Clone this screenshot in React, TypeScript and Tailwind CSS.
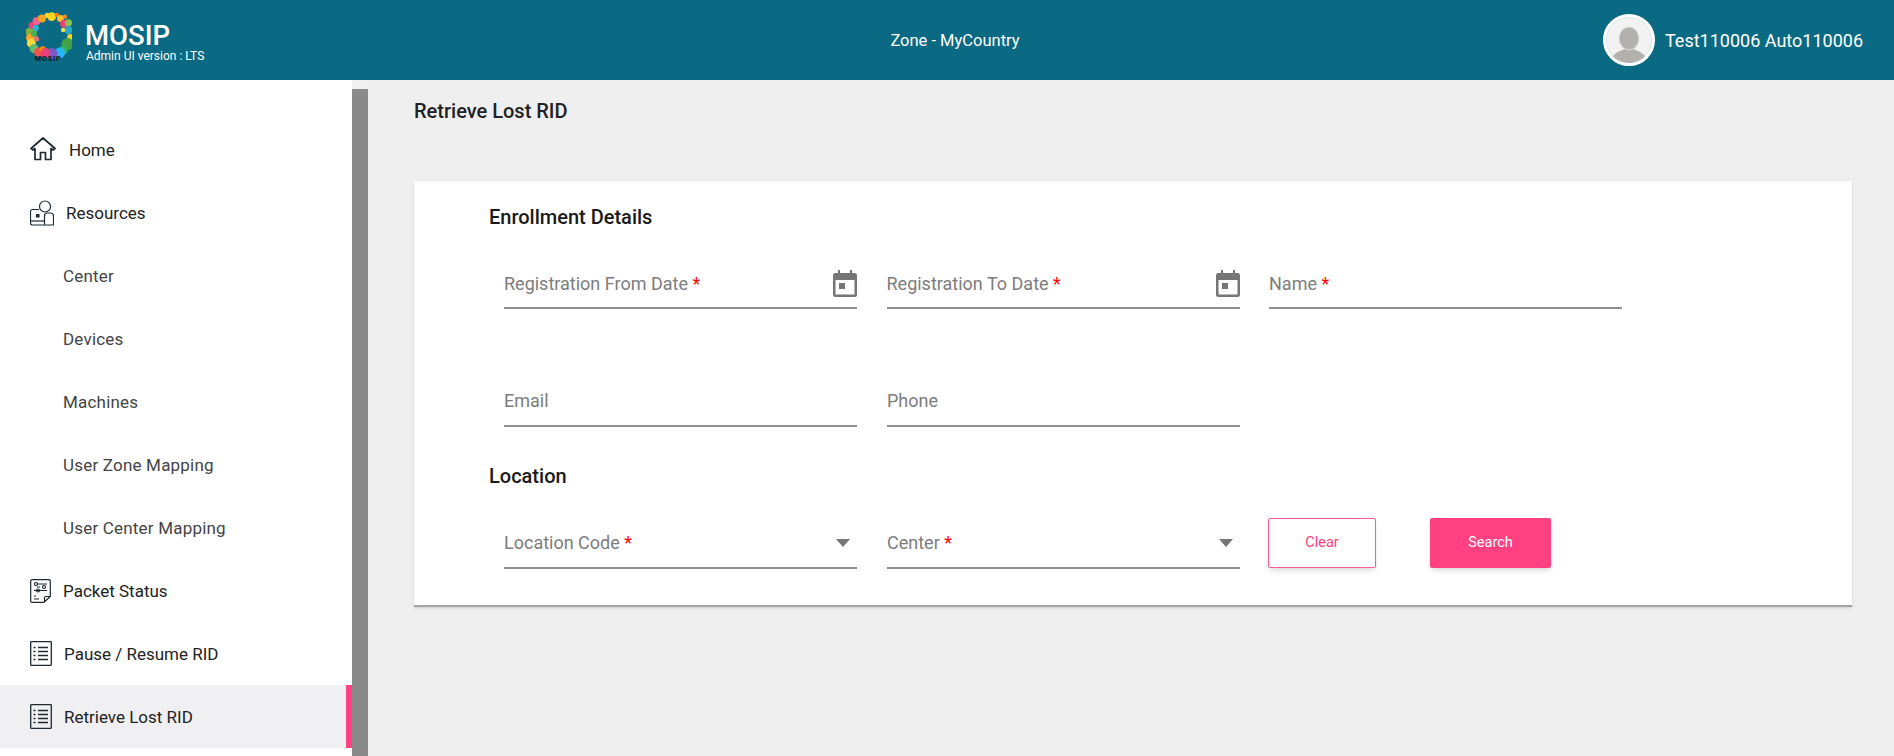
import React from "react";

const Logo = () => {
  const dots: [number, number, number, string][] = [
    [4, 22, 4.5, "#7cb342"], [5, 29, 5, "#f9a825"], [7, 15, 4, "#ec407a"], [12, 10, 4.5, "#f06292"], [11, 18, 3.5, "#29b6d8"],
    [6, 35, 5, "#fdd835"], [9, 41, 5, "#66bb6a"], [14, 45, 5, "#ef5350"], [19, 42, 3.5, "#fb8c00"],
    [18, 7, 4.5, "#f5a623"], [24, 3.5, 3, "#fdd835"], [29, 5, 5, "#f9d423"], [35, 3, 2.5, "#f57c20"], [39, 7, 4, "#fbc02d"],
    [44, 5, 2.5, "#f0892c"], [43, 13, 4.5, "#ec407a"], [48, 12, 4, "#8bc34a"], [48, 20, 4.5, "#26a9c9"], [42, 20, 2.5, "#f5e050"],
    [50, 28, 3.5, "#f9d423"], [47, 36, 7, "#43a047"], [42, 43, 5, "#2fb56a"], [38, 46, 6, "#29b6f6"], [29, 47, 6.5, "#7e57c2"],
    [22, 46, 5.5, "#ec407a"], [12, 30, 3, "#e57373"], [9, 24, 3.5, "#4caf50"],
  ];
  return (
    <svg width="46" height="50" viewBox="0 0 52 56" className="shrink-0 -mt-[6px]">
      {dots.map(([x, y, r, c], i) => (
        <circle key={i} cx={x} cy={y} r={r} fill={c} />
      ))}
      <ellipse cx="26" cy="24" rx="13" ry="11.500" fill="#0b6a83" />
      <text x="25" y="55" textAnchor="middle" fontSize="8.500" fontWeight="900" fill="#10222b" fontFamily="Roboto, sans-serif" letterSpacing="0.8">MOSIP</text>
    </svg>
  );
};

const HomeIcon = () => (
  <svg width="26" height="24" viewBox="0 0 26 24" fill="none" stroke="#1d2a30" strokeWidth="1.700" strokeLinejoin="round" strokeLinecap="round" className="-mt-[4px]">
    <path d="M1 11.500 13 1l12 10.500-2 1.500-2-1.500v11h-5.500v-7h-5v7H5v-11l-2 1.500z" />
  </svg>
);

const ResourcesIcon = () => (
  <svg width="24" height="26" viewBox="0 0 24 26" fill="none" stroke="#1d2a30" strokeWidth="1.200" strokeLinejoin="round" className="-mt-[2px]">
    <circle cx="15" cy="6.500" r="5.500" />
    <path d="M9 9.500H2.500a2 2 0 0 0-2 2V23a2 2 0 0 0 2 2h21V16a3 3 0 0 0-3-3h-3a3 3 0 0 0-3 3v9" />
    <path d="M.5 21h14" />
    <rect x="6.500" y="14.500" width="2.500" height="2.500" fill="#1d2a30" />
  </svg>
);

const PacketIcon = () => (
  <svg width="21" height="24" viewBox="0 0 21 24" fill="none" stroke="#1d2a30" strokeWidth="1.200" strokeLinejoin="round" className="-mt-[2px]">
    <path d="M2 .7h17a1.300 1.300 0 0 1 1.300 1.300v15.500L14 23.300H2A1.300 1.300 0 0 1 .7 22V2A1.300 1.300 0 0 1 2 .7z" />
    <path d="M14.500 23v-4a1.500 1.500 0 0 1 1.500-1.500h4" />
    <path d="M8 5h9M4 11.500h13M10 8h-3M4 20h5M4 17h2" />
    <circle cx="6" cy="5" r="1.500" />
    <circle cx="14" cy="8" r="1.500" />
    <circle cx="8" cy="11.500" r="1.500" />
  </svg>
);

const ListIcon = () => (
  <svg width="22" height="25" viewBox="0 0 22 25" fill="none" stroke="#1d2a30" strokeWidth="1.300" className="-mt-[2px]">
    <rect x="0.700" y="0.700" width="20.600" height="23.600" rx="0.500" />
    <path d="M8 6.500h10M8 10.500h10M8 14.500h10M8 18.500h10" />
    <path d="M3.500 6.500h2M3.500 10.500h2M3.500 14.500h2M3.500 18.500h2" />
  </svg>
);

const Calendar = () => (
  <svg width="24" height="27" viewBox="0 0 24 27" fill="#757575" className="shrink-0">
    <path d="M5 0h2v3h10V0h2v3h2.500A2.500 2.500 0 0 1 24 5.500v19a2.500 2.500 0 0 1-2.500 2.500h-19A2.500 2.500 0 0 1 0 24.500v-19A2.500 2.500 0 0 1 2.500 3H5zM2.500 10v14.500h19V10z" />
    <rect x="6" y="13" width="6" height="6" />
  </svg>
);

const Caret = () => <div className="w-0 h-0 shrink-0 mr-[7px] border-x-[7px] border-x-transparent border-t-[8px] border-t-[#757575]" />;

const Field = ({ label, req, right, tight }: { label: string; req?: boolean; right?: React.ReactNode; tight?: boolean }) => (
  <div className={`w-[353px] h-[52px] shrink-0 border-b-2 border-[#8f8f8f] flex items-center justify-between ${tight ? "pt-[1px]" : "pt-[3px]"}`}>
    <span className="text-[18px] text-[#7d7d7d] leading-none">
      {label}
      {req && <span className="text-[#ff0000]"> *</span>}
    </span>
    {right}
  </div>
);

const NavItem = ({ icon, label, active, gap }: { icon?: React.ReactNode; label: string; active?: boolean; gap?: string }) => (
  <div className={`relative h-[63px] flex items-center pt-[2px] pl-[30px] text-[17px] text-[#222] ${active ? "bg-[#f0f0f2]" : ""}`}>
    <div className={`flex items-center ${gap ?? ""}`}>
      {icon}
      <span className={icon ? "" : "ml-[33px] tracking-[0.2px] text-[#444]"}>{label}</span>
    </div>
    {active && <div className="absolute right-0 top-0 bottom-0 w-[6px] bg-[#ff4081]" />}
  </div>
);

export default function App() {
  return (
    <div className="w-[1894px] h-[756px] overflow-hidden flex flex-col bg-[#efefef] font-['Roboto',sans-serif]">
      <header className="h-[80px] shrink-0 bg-[#0b6a83] text-white flex items-center justify-between pl-[26px] pr-[31px]">
        <div className="w-[400px] flex items-center gap-[14px]">
          <Logo />
          <div className="flex flex-col pt-[4px]">
            <span className="text-[27.500px] font-medium leading-[28px] -ml-[1px]">MOSIP</span>
            <span className="text-[12px] leading-[12px]">Admin UI version : LTS</span>
          </div>
        </div>
        <div className="text-[16.500px] pt-[3px] ml-[21px]">Zone - MyCountry</div>
        <div className="w-[400px] flex items-center justify-end gap-[10px]">
          <div className="w-[52px] h-[52px] rounded-full border-[3px] border-white bg-[#f2f2f2] overflow-hidden">
            <svg viewBox="0 0 46 46" width="46" height="46">
              <circle cx="23" cy="23" r="22.500" fill="none" stroke="#cfe3e8" strokeWidth="0.800" />
              <path d="M6 42c1-6 8-8 13-10h8c5 2 12 4 13 10a23 23 0 0 1-34 0z" fill="#b3b1ae" />
              <ellipse cx="23" cy="21.500" rx="10" ry="11.500" fill="#b3b1ae" stroke="#e4e4e4" strokeWidth="0.800" />
            </svg>
          </div>
          <span className="text-[18px]">Test110006 Auto110006</span>
        </div>
      </header>
      <div className="flex-1 flex min-h-0">
        <aside className="w-[352px] shrink-0 bg-white pt-[38px]">
          <NavItem icon={<HomeIcon />} label="Home" gap="gap-[13px]" />
          <NavItem icon={<ResourcesIcon />} label="Resources" gap="gap-[12px]" />
          <NavItem label="Center" />
          <NavItem label="Devices" />
          <NavItem label="Machines" />
          <NavItem label="User Zone Mapping" />
          <NavItem label="User Center Mapping" />
          <NavItem icon={<PacketIcon />} label="Packet Status" gap="gap-[12px]" />
          <NavItem icon={<ListIcon />} label="Pause / Resume RID" gap="gap-[12px]" />
          <NavItem icon={<ListIcon />} label="Retrieve Lost RID" active gap="gap-[12px]" />
        </aside>
        <div className="w-[16px] shrink-0 bg-[#f1f1f1] pt-[9px]">
          <div className="h-full bg-[#8a8a8a]" />
        </div>
        <main className="flex-1 min-w-0 pl-[46px] pr-[42px]">
          <h1 className="text-[20px] font-medium text-[#222] leading-[22px] pt-[20px]">Retrieve Lost RID</h1>
          <section className="mt-[59px] h-[426px] bg-white border-b-2 border-[#a3a3a3] shadow-sm pl-[75px] pt-[22px]">
            <h2 className="text-[20px] font-medium text-[#1a1a1a] leading-[28px]">Enrollment Details</h2>
            <div className="ml-[15px] mt-[26px] flex gap-[29.500px]">
              <Field label="Registration From Date" req right={<Calendar />} />
              <Field label="Registration To Date" req right={<Calendar />} />
              <Field label="Name" req />
            </div>
            <div className="ml-[15px] mt-[66px] flex gap-[30px]">
              <Field label="Email" tight />
              <Field label="Phone" tight />
            </div>
            <h2 className="mt-[35px] text-[20px] font-medium text-[#1a1a1a] leading-[28px]">Location</h2>
            <div className="ml-[15px] mt-[27px] flex gap-[30px] items-end">
              <Field label="Location Code" req right={<Caret />} tight />
              <Field label="Center" req right={<Caret />} tight />
              <div className="flex gap-[54px] -ml-[2px] mb-[1px]">
                <button className="w-[108px] h-[50px] bg-white border-[1.500px] border-[#ff5c8f] rounded-[2px] text-[#ff4081] text-[14.500px] shadow-md">Clear</button>
                <button className="w-[121px] h-[50px] bg-[#ff4081] rounded-[2px] text-white text-[14.500px] shadow-md">Search</button>
              </div>
            </div>
          </section>
        </main>
      </div>
    </div>
  );
}
